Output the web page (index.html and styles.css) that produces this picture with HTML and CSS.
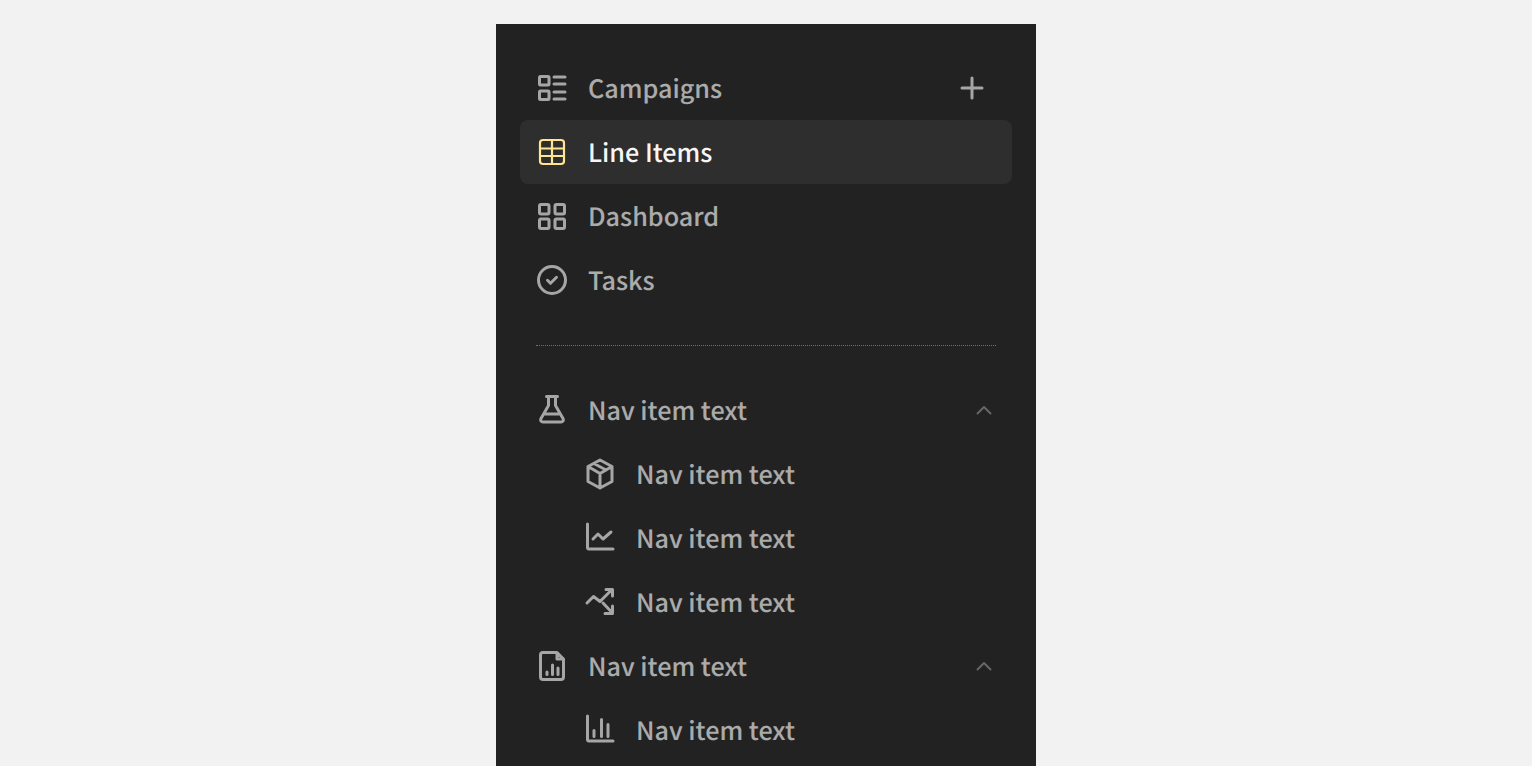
FILE: index.html
```html
<!DOCTYPE html>
<html lang="en">

<head>
    <meta charset="UTF-8">
    <title>Navigation</title>
    <link rel="stylesheet" href="styles.css">
</head>

<body>
    <nav class="sidebar">

        <div class="nav_group">
            <a class="nav_item">
                <svg class="icon" viewBox="0 0 32 32">
                    <rect x="3.500" y="4.500" width="9.500" height="8.500" rx="1" />
                    <rect x="3.500" y="19" width="9.500" height="8.500" rx="1" />
                    <path d="M18 5h11M18 12h11M18 20h11M18 27h11" />
                </svg>
                <span class="label">Campaigns</span>
                <svg class="icon add" viewBox="0 0 32 32">
                    <path d="M16 6v20M6 16h20" />
                </svg>
            </a>
            <a class="nav_item active">
                <svg class="icon thin" viewBox="0 0 32 32">
                    <rect x="4" y="4" width="24" height="24" rx="3" />
                    <path d="M4 12.500h24M4 20h24M16 4v24" />
                </svg>
                <span class="label">Line Items</span>
            </a>
            <a class="nav_item">
                <svg class="icon" viewBox="0 0 32 32">
                    <rect x="3.500" y="4.500" width="9.500" height="9.500" rx="1.500" />
                    <rect x="19" y="4.500" width="9.500" height="9.500" rx="1.500" />
                    <rect x="3.500" y="19" width="9.500" height="9.500" rx="1.500" />
                    <rect x="19" y="19" width="9.500" height="9.500" rx="1.500" />
                </svg>
                <span class="label">Dashboard</span>
            </a>
            <a class="nav_item">
                <svg class="icon" viewBox="0 0 32 32">
                    <circle cx="16" cy="16" r="13.500" />
                    <path d="M11.500 16.300l3 3 6-6" />
                </svg>
                <span class="label">Tasks</span>
            </a>
        </div>

        <hr class="divider">

        <div class="nav_group">
            <a class="nav_item">
                <svg class="icon" viewBox="0 0 32 32">
                    <path d="M10.500 2.500h11M12.500 2.500v9L5 24.500c-1 2 .2 3.500 2 3.500h18c1.800 0 3-1.500 2-3.500l-7.500-13v-9M8.500 20h15" />
                </svg>
                <span class="label">Nav item text</span>
                <svg class="icon chevron" viewBox="0 0 32 32">
                    <path d="M9.500 19.500L16 13l6.500 6.500" />
                </svg>
            </a>
            <a class="nav_item sub">
                <svg class="icon" viewBox="0 0 32 32">
                    <path d="M16 2l12 6.500v15L16 30 4 23.500v-15zM4 8.500l12 7 12-7M16 15.500V30M10 5.500l12 6.500" />
                </svg>
                <span class="label">Nav item text</span>
            </a>
            <a class="nav_item sub">
                <svg class="icon" viewBox="0 0 32 32">
                    <path d="M3.500 2v23.500c0 1 .5 1.500 1.500 1.500h24M9 17l5-5 5 5 8-7" />
                </svg>
                <span class="label">Nav item text</span>
            </a>
            <a class="nav_item sub">
                <svg class="icon" viewBox="0 0 32 32">
                    <path d="M3 17l6.500-6.500 6.500 5 12-12M22 3.500h6.500V10M19 17l9.500 10M28.500 20v7.500H21" />
                </svg>
                <span class="label">Nav item text</span>
            </a>
            <a class="nav_item">
                <svg class="icon" viewBox="0 0 32 32">
                    <path d="M21 2.500H7c-1.500 0-2.500 1-2.500 2.500v22c0 1.500 1 2.500 2.500 2.500h18c1.500 0 2.500-1 2.500-2.500V9zM21 2.500V9h6.500M11 22v2.500M16.500 15v9.500M22 18v6.500" />
                </svg>
                <span class="label">Nav item text</span>
                <svg class="icon chevron" viewBox="0 0 32 32">
                    <path d="M9.500 19.500L16 13l6.500 6.500" />
                </svg>
            </a>
            <a class="nav_item sub">
                <svg class="icon" viewBox="0 0 32 32">
                    <path d="M3.500 2v23.500c0 1 .5 1.500 1.500 1.500h24M10 16.500v6M17.500 5.500v17M24 10.500v12" />
                </svg>
                <span class="label">Nav item text</span>
            </a>
        </div>

    </nav>
</body>

</html>
```

FILE: styles.css
```css
* {
    margin: 0;
    padding: 0;
    box-sizing: border-box;
}

body {
    height: 100vh;
    overflow: hidden;
    display: flex;
    justify-content: center;
    align-items: flex-start;
    background: #f2f2f2;
    font-family: "Noto Sans CJK SC", "Noto Sans", sans-serif;
    text-rendering: geometricPrecision;
}

.sidebar {
    width: 540px;
    margin-top: 24px;
    padding: 32px 24px;
    background: #222222;
}

.nav_item {
    display: flex;
    align-items: center;
    gap: 20px;
    height: 64px;
    padding: 0 16px;
    border-radius: 8px;
    color: #ffffff;
    font-size: 25.2px;
    font-weight: 500;
}

.nav_item.sub {
    padding-left: 64px;
}

.nav_item.active {
    background: #2e2e2e;
}

.label {
    flex: 1;
    opacity: 0.62;
}

.active .label {
    opacity: 0.96;
}

.icon {
    width: 32px;
    height: 32px;
    flex-shrink: 0;
    fill: none;
    stroke: #a6a6a6;
    stroke-width: 3;
    stroke-linecap: round;
    stroke-linejoin: round;
}

.icon.thin {
    stroke-width: 2.200;
}

.active .icon {
    stroke: #ffe58f;
}

.add {
    margin-right: 8px;
}

.chevron {
    margin-right: -4px;
    stroke: #666666;
    stroke-width: 2;
}

.divider {
    height: 0;
    margin: 33px 16px 32px;
    border: 0;
    border-top: 1px dotted #707070;
}
```
